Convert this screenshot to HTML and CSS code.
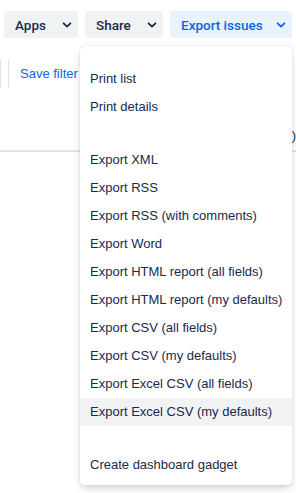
FILE: index.html
```html
<!DOCTYPE html>
<html lang="en">
<head>
    <meta charset="UTF-8">
    <meta name="viewport" content="width=device-width, initial-scale=1.0">
    <title>Issues - Export</title>
    <link rel="stylesheet" href="styles.css">
</head>
<body>
    <div class="page">
        <div class="toolbar">
            <button class="tool-btn btn-apps">
                <span>Apps</span>
                <svg class="chevron" width="10" height="10" viewBox="0 0 10 10"><path d="M1.6 3.3 5 6.6 8.4 3.3" /></svg>
            </button>
            <button class="tool-btn btn-share">
                <span>Share</span>
                <svg class="chevron" width="10" height="10" viewBox="0 0 10 10"><path d="M1.6 3.3 5 6.6 8.4 3.3" /></svg>
            </button>
            <button class="tool-btn btn-export is-open">
                <span>Export issues</span>
                <svg class="chevron" width="10" height="10" viewBox="0 0 10 10"><path d="M1.6 3.3 5 6.6 8.4 3.3" /></svg>
            </button>
        </div>

        <div class="filter-bar">
            <span class="divider"></span>
            <span class="divider"></span>
            <a class="save-filter" href="#">Save filter</a>
        </div>

        <div class="sort-row">
            <span class="sort-label">Order by (Created)</span>
        </div>
        <div class="rule"></div>

        <!-- export dropdown -->
        <div class="menu">
            <div class="menu-section">
                <a class="menu-item" href="#">Print list</a>
                <a class="menu-item" href="#">Print details</a>
            </div>
            <div class="menu-section">
                <a class="menu-item" href="#">Export XML</a>
                <a class="menu-item" href="#">Export RSS</a>
                <a class="menu-item" href="#">Export RSS (with comments)</a>
                <a class="menu-item" href="#">Export Word</a>
                <a class="menu-item" href="#">Export HTML report (all fields)</a>
                <a class="menu-item" href="#">Export HTML report (my defaults)</a>
                <a class="menu-item" href="#">Export CSV (all fields)</a>
                <a class="menu-item" href="#">Export CSV (my defaults)</a>
                <a class="menu-item" href="#">Export Excel CSV (all fields)</a>
                <a class="menu-item is-hover" href="#">Export Excel CSV (my defaults)</a>
            </div>
            <div class="menu-section">
                <a class="menu-item" href="#">Create dashboard gadget</a>
            </div>
        </div>
    </div>
</body>
</html>
```

FILE: styles.css
```css
* {
    margin: 0;
    padding: 0;
    box-sizing: border-box;
}

body {
    font-family: "Liberation Sans", Arial, sans-serif;
    background: #fff;
    color: #172b4d;
    font-size: 13px;
    line-height: 1.5;
    width: 296px;
    height: 493px;
    overflow: hidden;
}

.page {
    position: relative;
    height: 100%;
}

.toolbar {
    display: flex;
    gap: 7px;
    padding: 11px 4px 0;
}

.tool-btn {
    display: flex;
    align-items: center;
    justify-content: space-between;
    height: 27px;
    padding: 0 6px 0 11px;
    border: none;
    border-radius: 3px;
    background: #f1f2f4;
    color: #172b4d;
    font-family: Roboto, "Liberation Sans", sans-serif;
    font-size: 13.5px;
    font-weight: 500;
    cursor: pointer;
}

.btn-apps {
    width: 74px;
}

.btn-share {
    width: 78px;
}

.btn-export {
    width: 122px;
}

.tool-btn.is-open {
    background: #e9f2ff;
    color: #0c66e4;
}

.chevron path {
    fill: none;
    stroke: currentColor;
    stroke-width: 1.8;
    stroke-linecap: round;
    stroke-linejoin: round;
}

.filter-bar {
    display: flex;
    align-items: center;
    height: 28px;
    margin-top: 22px;
}

.divider {
    width: 1px;
    height: 28px;
    background: #dcdfe4;
    margin-right: 7px;
}

.save-filter {
    margin-left: 4px;
    color: #0c66e4;
    text-decoration: none;
}

.sort-row {
    display: flex;
    justify-content: flex-end;
    height: 18px;
    margin-top: 39px;
    line-height: 18px;
}

.sort-label {
    color: #172b4d;
}

.rule {
    height: 2px;
    margin-top: 5px;
    background: #e2e4e9;
}

.menu {
    position: absolute;
    top: 46px;
    left: 80px;
    width: 212px;
    padding: 0 0 6px;
    background: #fff;
    border-radius: 4px;
    box-shadow: 0 4px 8px -2px rgba(9, 30, 66, 0.25), 0 0 1px rgba(9, 30, 66, 0.31);
}

.menu-section {
    padding: 6px 0 0;
}

.menu-section::before {
    content: "";
    display: block;
    height: 13px;
}

.menu-section + .menu-section {
    margin-top: 6px;
}

.menu-item {
    display: flex;
    align-items: center;
    height: 28px;
    padding: 0 10px;
    color: #172b4d;
    text-decoration: none;
    white-space: nowrap;
}

.menu-item.is-hover {
    background: #f1f2f4;
}
```
